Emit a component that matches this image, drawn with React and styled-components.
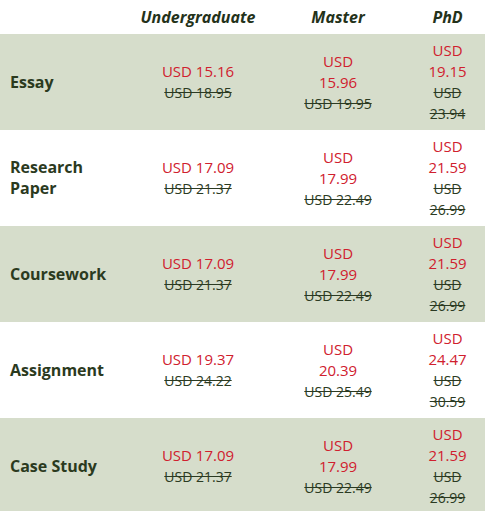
import styled, { createGlobalStyle } from "styled-components";

const GlobalStyle = createGlobalStyle`
  body {
    margin: 0;
    background: #ffffff;
    font-family: "Open Sans", "Noto Sans", sans-serif;
  }
`;

const columns = "130px 136px 144px 75px";

const Table = styled.div`
  width: 485px;
  display: flex;
  flex-direction: column;
`;

const Row = styled.div`
  display: grid;
  grid-template-columns: ${columns};
  min-height: ${(props) => (props.$head ? "34px" : "96px")};
  background-color: ${(props) => (props.$shaded ? "#d6ddcb" : "#ffffff")};
`;

const HeadCell = styled.div`
  display: flex;
  align-items: center;
  justify-content: center;
  font-size: 16px;
  font-weight: 700;
  font-style: italic;
  color: #24321a;
`;

const Label = styled.div`
  display: flex;
  align-items: center;
  padding: 6px 10px;
  font-size: 16px;
  font-weight: 700;
  line-height: 21px;
  color: #2b3a1e;
`;

const PriceCell = styled.div`
  display: flex;
  align-items: center;
  justify-content: center;
  padding: 6px 4px;
`;

const PriceBox = styled.div`
  max-width: ${(props) => props.$max || "none"};
  text-align: center;
  line-height: 21px;
`;

const Now = styled.div`
  font-size: 15px;
  color: #d0202e;
`;

const Was = styled.div`
  font-size: 14px;
  color: #2b3a22;
  text-decoration: line-through;
`;

const widths = ["none", "70px", "45px"];

const rows = [
  { name: "Essay", prices: [["15.16", "18.95"], ["15.96", "19.95"], ["19.15", "23.94"]] },
  { name: "Research Paper", prices: [["17.09", "21.37"], ["17.99", "22.49"], ["21.59", "26.99"]] },
  { name: "Coursework", prices: [["17.09", "21.37"], ["17.99", "22.49"], ["21.59", "26.99"]] },
  { name: "Assignment", prices: [["19.37", "24.22"], ["20.39", "25.49"], ["24.47", "30.59"]] },
  { name: "Case Study", prices: [["17.09", "21.37"], ["17.99", "22.49"], ["21.59", "26.99"]] },
];

export default function App() {
  return (
    <>
      <GlobalStyle />
      <Table>
        <Row $head>
          <HeadCell />
          <HeadCell>Undergraduate</HeadCell>
          <HeadCell>Master</HeadCell>
          <HeadCell>PhD</HeadCell>
        </Row>
        {rows.map((row, i) => (
          <Row key={row.name} $shaded={i % 2 === 0}>
            <Label>{row.name}</Label>
            {row.prices.map(([now, was], j) => (
              <PriceCell key={j}>
                <PriceBox $max={widths[j]}>
                  <Now>USD {now}</Now>
                  <Was>USD {was}</Was>
                </PriceBox>
              </PriceCell>
            ))}
          </Row>
        ))}
      </Table>
    </>
  );
}
